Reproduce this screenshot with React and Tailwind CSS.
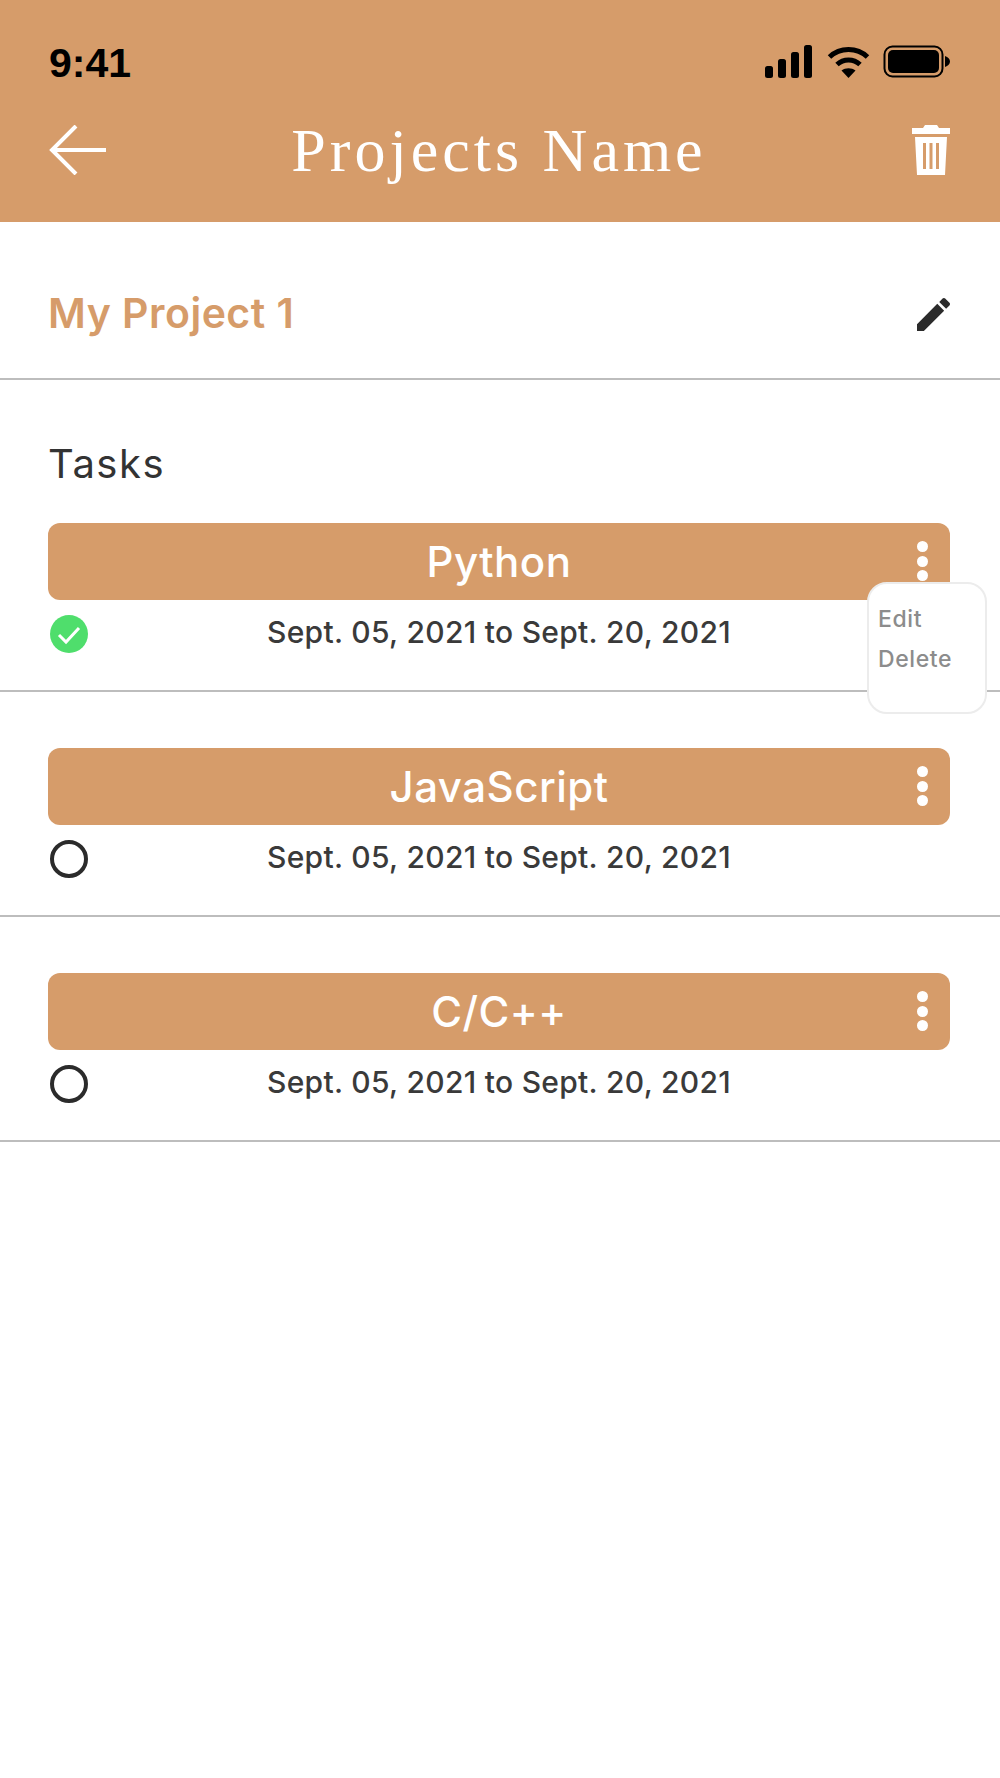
import React from 'react';

const tasks = [
  { id: 1, name: 'Python', done: true },
  { id: 2, name: 'JavaScript', done: false },
  { id: 3, name: 'C/C++', done: false },
];

const StatusIcons = () => (
  <div className="flex items-center">
    <svg width="48" height="33" viewBox="0 0 48 33" fill="#000">
      <rect x="0" y="21" width="8" height="12" rx="2.5" />
      <rect x="13" y="14" width="8" height="19" rx="2.5" />
      <rect x="26" y="7" width="8" height="26" rx="2.5" />
      <rect x="39" y="0" width="8" height="33" rx="2.5" />
    </svg>
    <svg className="ml-[14px]" width="43" height="33" viewBox="0 0 43 33" fill="none" stroke="#000" strokeWidth="5">
      <path d="M2.5 12 C13 2 30 2 40.5 12" />
      <path d="M10 19.5 C16.5 13.5 26.5 13.5 33 19.5" />
      <path d="M21.5 33 L14.5 25.5 C18.5 22.5 24.5 22.5 28.5 25.5 Z" fill="#000" stroke="none" />
    </svg>
    <svg className="ml-[13px]" width="67" height="33" viewBox="0 0 67 33">
      <rect x="1.5" y="1.5" width="58" height="30" rx="8" fill="none" stroke="#000" strokeWidth="2" />
      <rect x="5" y="5" width="51" height="23" rx="5" fill="#000" />
      <path d="M62 11 C65 12 67 14 67 16.5 C67 19 65 21 62 22 Z" fill="#000" />
    </svg>
  </div>
);

const TaskRow = ({ task }) => (
  <div className="relative h-[225px] pt-[56px] border-b-2 border-[#bdbdbd]">
    <div className="relative ml-12 mr-[50px] h-[77px] rounded-xl bg-[#d69c6a] flex items-center justify-center">
      <span className="text-[42px] font-medium tracking-[0.5px] text-white">{task.name}</span>
      <div className="absolute right-[22px] top-[18px] flex flex-col gap-[3.5px]">
        <span className="w-[11px] h-[11px] rounded-full bg-white" />
        <span className="w-[11px] h-[11px] rounded-full bg-white" />
        <span className="w-[11px] h-[11px] rounded-full bg-white" />
      </div>
    </div>
    <div className="relative ml-12 mr-[50px] mt-[13px] h-[38px] flex items-center justify-center">
      <div className="absolute left-[2px] top-[2px]">
        {task.done ? (
          <svg width="38" height="38" viewBox="0 0 38 38">
            <circle cx="19" cy="19" r="19" fill="#4fde6c" />
            <path d="M9 20 L16 27 L29 13" fill="none" stroke="#fff" strokeWidth="3" />
          </svg>
        ) : (
          <div className="w-[38px] h-[38px] rounded-full border-4 border-[#2b2b2b]" />
        )}
      </div>
      <span className="text-[30px] font-medium tracking-[0.3px] text-[#3a3a3a]">Sept. 05, 2021 to Sept. 20, 2021</span>
    </div>
    {task.done && (
      <div className="absolute z-10 left-[867px] top-[115px] w-[120px] h-[132px] rounded-[20px] bg-white border-2 border-[#ececec] pl-[9px] pt-[15px] text-[23px] font-medium tracking-[0.6px] text-[#8c8c8c] leading-[40px]">
        <div>Edit</div>
        <div>Delete</div>
      </div>
    )}
  </div>
);

const App = () => {
  return (
    <div className="w-[1000px] h-[1778px] bg-white overflow-hidden font-['Inter',sans-serif]">
      <header className="h-[222px] bg-[#d69c6a] pl-12 pr-[50px] pt-[45px]">
        <div className="flex items-center justify-between h-[33px]">
          <span className="text-[41px] font-semibold text-black font-['Liberation_Sans',sans-serif] ml-[1px] mt-1">9:41</span>
          <StatusIcons />
        </div>
        <div className="relative flex items-center justify-between mt-[47px] h-[50px]">
          <svg width="58" height="50" viewBox="0 0 58 50" fill="none" stroke="#fff" strokeWidth="4" className="ml-[1px]">
            <path d="M57 25 H3 M27 1 L3 25 L27 49" />
          </svg>
          <h1 className="absolute left-0 right-0 text-center text-[62px] tracking-[4px] leading-[50px] text-white font-['Liberation_Serif',serif]">Projects Name</h1>
          <svg width="38" height="50" viewBox="0 0 38 50" fill="#fff">
            <path d="M13 0 H25 L27 3 H38 V9 H0 V3 H11 Z" />
            <path d="M3 12 H35 L33 50 H5 Z M11 18 V44 H14 V18 Z M17.5 18 V44 H20.5 V18 Z M24 18 V44 H27 V18 Z" fillRule="evenodd" />
          </svg>
        </div>
      </header>

      <div className="h-[158px] pl-12 pr-[50px] pt-[28px] flex items-center justify-between border-b-2 border-[#bdbdbd]">
        <h2 className="text-[41px] font-semibold tracking-[0.5px] text-[#d69c6a]">My Project 1</h2>
        <svg width="33" height="33" viewBox="3 3 18 18" fill="#2b2b2b">
          <path d="M3 17.25V21h3.75L17.81 9.94l-3.75-3.75L3 17.25zM20.71 7.04c.39-.39.39-1.02 0-1.41l-2.34-2.34c-.39-.39-1.02-.39-1.41 0l-1.83 1.83 3.75 3.75 1.83-1.83z" />
        </svg>
      </div>

      <div className="h-[87px] px-12 pt-[61px] text-[40px] tracking-[1.5px] leading-[46px] text-[#333] font-normal">Tasks</div>

      <main className="relative">
        {tasks.map((task) => (
          <TaskRow key={task.id} task={task} />
        ))}
      </main>
    </div>
  );
};

export default App;
